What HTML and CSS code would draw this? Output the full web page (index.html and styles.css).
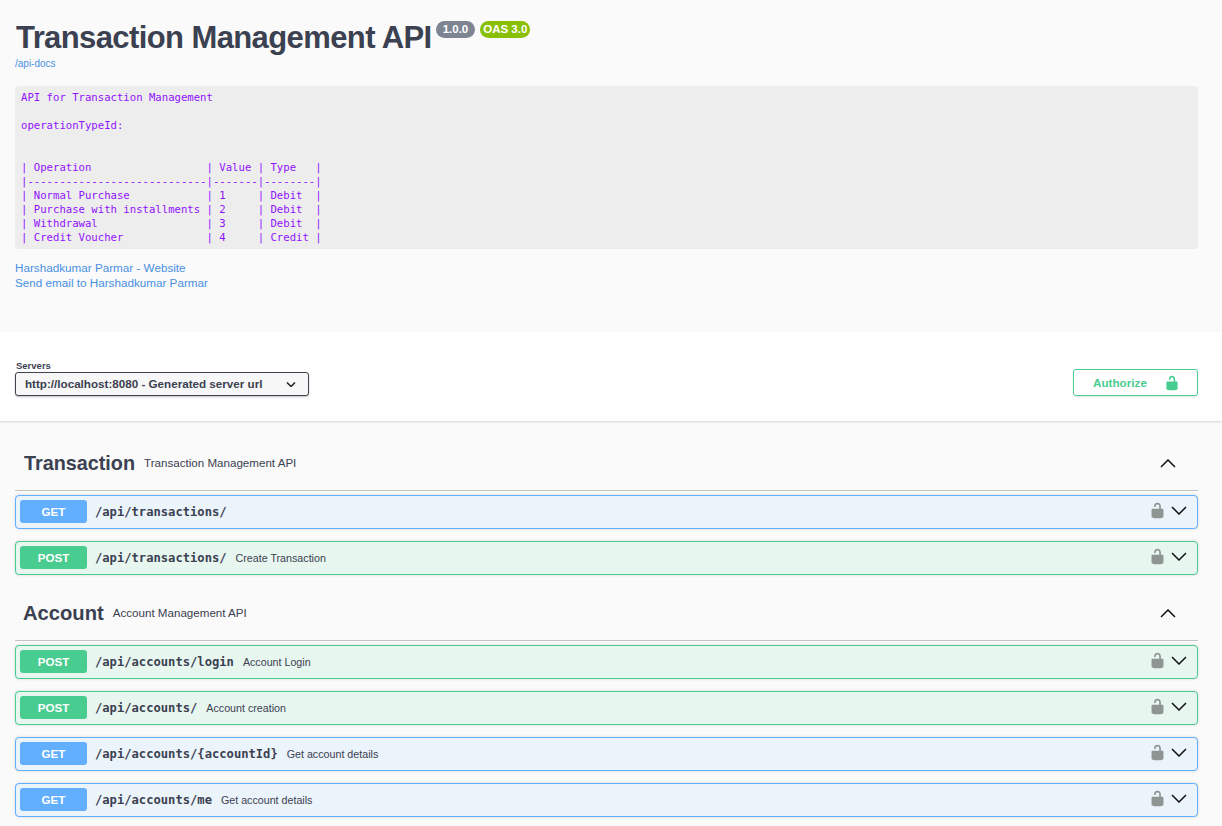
FILE: index.html
```html
<!DOCTYPE html>
<html lang="en">
<head>
    <meta charset="UTF-8">
    <meta name="viewport" content="width=device-width, initial-scale=1.0">
    <title>Transaction Management API</title>
    <link rel="stylesheet" href="styles.css">
</head>
<body>
    <svg class="sprite" xmlns="http://www.w3.org/2000/svg">
        <symbol id="lock" viewBox="0 0 20 20">
            <path d="M15.8 8H14V5.6C14 2.703 12.665 1 10 1 7.334 1 6 2.703 6 5.6V6h2v-.801C8 3.754 8.797 3 10 3c1.203 0 2 .754 2 2.199V8H4c-.553 0-1 .646-1 1.199V17c0 .549.428 1.139.951 1.307l1.197.387C5.672 18.861 6.55 19 7.1 19h5.8c.549 0 1.428-.139 1.951-.307l1.196-.387c.524-.167.953-.757.953-1.306V9.199C17 8.646 16.352 8 15.8 8z"/>
        </symbol>
        <symbol id="chevron-down" viewBox="0 0 16 9">
            <path d="M1 1l7 7 7-7" fill="none" stroke="#111" stroke-width="1.5"/>
        </symbol>
        <symbol id="chevron-up" viewBox="0 0 16 9">
            <path d="M1 8l7-7 7 7" fill="none" stroke="#111" stroke-width="1.5"/>
        </symbol>
    </svg>

    <section class="info">
        <div class="title-row">
            <h1 class="title">Transaction Management API</h1>
            <span class="badge badge-version">1.0.0</span>
            <span class="badge badge-oas">OAS 3.0</span>
        </div>
        <a class="docs-link" href="#">/api-docs</a>
        <pre class="description">API for Transaction Management

operationTypeId:


| Operation                  | Value | Type   |
|----------------------------|-------|--------|
| Normal Purchase            | 1     | Debit  |
| Purchase with installments | 2     | Debit  |
| Withdrawal                 | 3     | Debit  |
| Credit Voucher             | 4     | Credit |</pre>
        <div class="contact">
            <a href="#">Harshadkumar Parmar - Website</a>
            <a href="#">Send email to Harshadkumar Parmar</a>
        </div>
    </section>

    <section class="schemes">
        <div class="servers">
            <span class="servers-label">Servers</span>
            <div class="server-select">
                <span class="server-url">http://localhost:8080 - Generated server url</span>
                <svg width="10" height="5" viewBox="0 0 10 5"><path d="M1 .5l4 4 4-4" fill="none" stroke="#222" stroke-width="1.5"/></svg>
            </div>
        </div>
        <button class="authorize" type="button">
            <span>Authorize</span>
            <svg class="lock-open" width="16" height="16"><use href="#lock"/></svg>
        </button>
    </section>

    <main class="operations">
        <div class="tag">
            <h3 class="tag-name">Transaction</h3>
            <span class="tag-desc">Transaction Management API</span>
            <svg class="tag-arrow" width="16" height="9"><use href="#chevron-up"/></svg>
        </div>
        <div class="op op-get">
            <span class="method">GET</span>
            <span class="path">/api/transactions/</span>
            <span class="op-icons">
                <svg class="lock-grey" width="17" height="17"><use href="#lock"/></svg>
                <svg width="16" height="9"><use href="#chevron-down"/></svg>
            </span>
        </div>
        <div class="op op-post">
            <span class="method">POST</span>
            <span class="path">/api/transactions/</span>
            <span class="summary">Create Transaction</span>
            <span class="op-icons">
                <svg class="lock-grey" width="17" height="17"><use href="#lock"/></svg>
                <svg width="16" height="9"><use href="#chevron-down"/></svg>
            </span>
        </div>

        <div class="tag tag-account">
            <h3 class="tag-name">Account</h3>
            <span class="tag-desc">Account Management API</span>
            <svg class="tag-arrow" width="16" height="9"><use href="#chevron-up"/></svg>
        </div>
        <div class="op op-post">
            <span class="method">POST</span>
            <span class="path">/api/accounts/login</span>
            <span class="summary">Account Login</span>
            <span class="op-icons">
                <svg class="lock-grey" width="17" height="17"><use href="#lock"/></svg>
                <svg width="16" height="9"><use href="#chevron-down"/></svg>
            </span>
        </div>
        <div class="op op-post">
            <span class="method">POST</span>
            <span class="path">/api/accounts/</span>
            <span class="summary">Account creation</span>
            <span class="op-icons">
                <svg class="lock-grey" width="17" height="17"><use href="#lock"/></svg>
                <svg width="16" height="9"><use href="#chevron-down"/></svg>
            </span>
        </div>
        <div class="op op-get">
            <span class="method">GET</span>
            <span class="path">/api/accounts/{accountId}</span>
            <span class="summary">Get account details</span>
            <span class="op-icons">
                <svg class="lock-grey" width="17" height="17"><use href="#lock"/></svg>
                <svg width="16" height="9"><use href="#chevron-down"/></svg>
            </span>
        </div>
        <div class="op op-get">
            <span class="method">GET</span>
            <span class="path">/api/accounts/me</span>
            <span class="summary">Get account details</span>
            <span class="op-icons">
                <svg class="lock-grey" width="17" height="17"><use href="#lock"/></svg>
                <svg width="16" height="9"><use href="#chevron-down"/></svg>
            </span>
        </div>
    </main>
</body>
</html>
```

FILE: styles.css
```css
body {
    margin: 0;
    background: #fafafa;
    color: #3b4151;
    font-family: "Liberation Sans", Arial, sans-serif;
}
a {
    color: #4990e2;
    text-decoration: none;
}
.sprite {
    display: none;
}
.info {
    height: 332px;
    padding: 0 24px 0 15px;
    box-sizing: border-box;
}
.title-row {
    display: flex;
    align-items: flex-start;
    padding-top: 20px;
}
.title {
    margin: 0 4px 0 1px;
    font-size: 31px;
    line-height: 35px;
    letter-spacing: -0.6px;
    font-weight: 700;
    color: #3b4151;
}
.badge {
    margin-top: 1px;
    margin-right: 5px;
    height: 17px;
    line-height: 17px;
    border-radius: 9px;
    font-size: 11.5px;
    font-weight: 700;
    color: #fff;
}
.badge-version {
    padding: 0 7px;
    background: #7d8492;
}
.badge-oas {
    padding: 0 3px;
    background: #89bf04;
}
.docs-link {
    display: block;
    margin-top: 3px;
    font-size: 10px;
    line-height: 12px;
}
.description {
    margin: 16px 0 0;
    padding: 5px 6px;
    height: 163px;
    box-sizing: border-box;
    background: #ededed;
    border-radius: 4px;
    color: #9012fe;
    font-family: "DejaVu Sans Mono", monospace;
    font-size: 10.63px;
    line-height: 14px;
}
.contact {
    display: flex;
    flex-direction: column;
    margin-top: 11px;
    font-size: 11.7px;
    line-height: 15px;
}
.schemes {
    display: flex;
    align-items: flex-end;
    justify-content: space-between;
    height: 89px;
    padding: 0 24px 25px 15px;
    box-sizing: border-box;
    background: #fff;
    box-shadow: 0 1px 2px rgba(0, 0, 0, 0.15);
}
.servers-label {
    display: block;
    margin-bottom: 1px;
    padding-left: 1px;
    font-size: 9.5px;
    line-height: 11px;
    font-weight: 700;
}
.server-select {
    display: flex;
    align-items: center;
    justify-content: space-between;
    width: 294px;
    height: 24px;
    padding: 0 12px 0 9px;
    box-sizing: border-box;
    border: 1px solid #41444e;
    border-radius: 3px;
    background: #f7f7f7;
    box-shadow: 0 1px 2px rgba(0, 0, 0, 0.25);
    font-size: 11.65px;
    font-weight: 700;
}
.server-url {
    padding-bottom: 2px;
}
.authorize {
    display: flex;
    align-items: center;
    justify-content: space-between;
    width: 125px;
    height: 27px;
    padding: 0 17px 0 19px;
    border: 1px solid #49cc90;
    border-radius: 3px;
    background: transparent;
    box-shadow: 0 1px 2px rgba(0, 0, 0, 0.1);
    color: #49cc90;
    font-family: inherit;
    font-size: 11.7px;
    font-weight: 700;
}
.lock-open {
    fill: #49cc90;
}
.lock-grey {
    fill: #8f9593;
}
.operations {
    padding: 0 24px 0 15px;
}
.tag {
    display: flex;
    align-items: center;
    height: 70px;
    box-sizing: border-box;
    padding: 15px 22px 0 9px;
    border-bottom: 1px solid #c4c4c4;
}
.tag-account {
    height: 54px;
    padding: 0 22px 0 8px;
}
.tag-account .tag-name {
    margin-right: 9px;
    font-size: 20.2px;
}
.tag-name {
    margin: 0 9px 0 0;
    font-size: 19.8px;
    font-weight: 700;
}
.tag-desc {
    margin-bottom: 2px;
    font-size: 11.6px;
}
.tag-arrow {
    margin-left: auto;
}
.op {
    display: flex;
    align-items: center;
    height: 34px;
    margin-top: 4px;
    margin-bottom: 12px;
    padding: 0 10px 0 4px;
    box-sizing: border-box;
    border: 1px solid;
    border-radius: 4px;
    box-shadow: 0 0 3px rgba(0, 0, 0, 0.15);
}
.op + .op {
    margin-top: 0;
}
.op-get {
    border-color: #61affe;
    background: #ebf3fb;
}
.op-post {
    border-color: #49cc90;
    background: #e8f6f0;
}
.method {
    width: 67px;
    height: 23px;
    line-height: 23px;
    margin-right: 8px;
    margin-bottom: 1px;
    border-radius: 3px;
    color: #fff;
    font-size: 11.6px;
    font-weight: 700;
    text-align: center;
}
.op-get .method {
    background: #61affe;
}
.op-post .method {
    background: #49cc90;
}
.path {
    font-family: "DejaVu Sans Mono", monospace;
    font-size: 12.15px;
    font-weight: 700;
    color: #3b4151;
}
.summary {
    margin-left: 9px;
    font-size: 10.7px;
    color: #3b4151;
}
.op-icons {
    display: flex;
    align-items: center;
    gap: 5px;
    margin-left: auto;
    margin-bottom: 3px;
}
```
